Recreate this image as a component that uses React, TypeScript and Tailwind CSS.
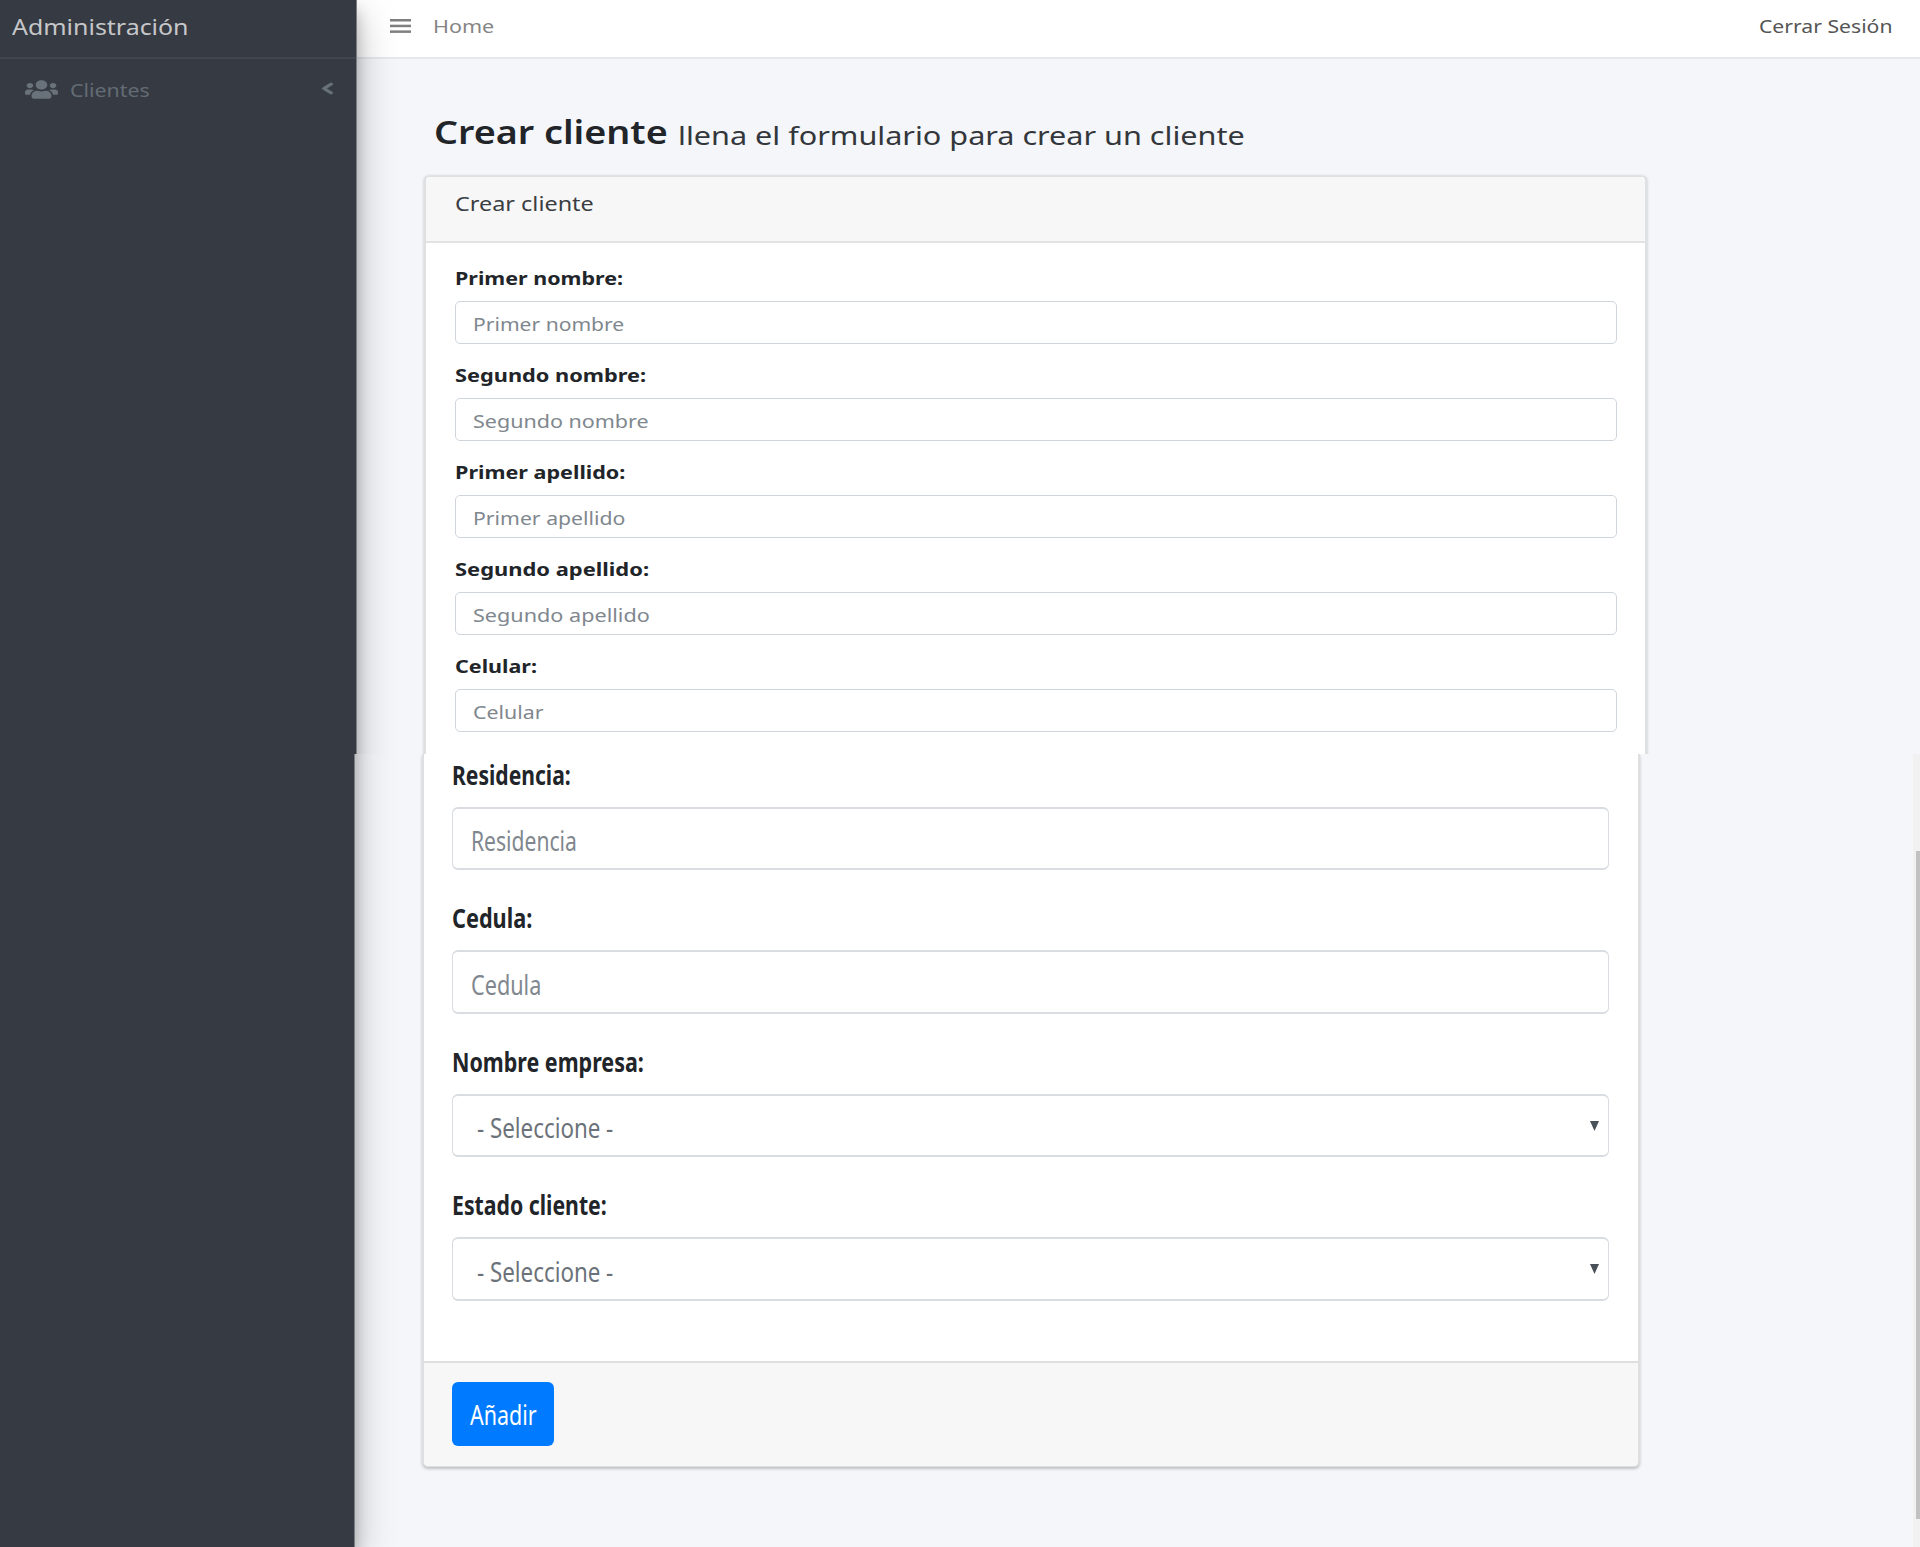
import { useLayoutEffect, useRef, useState } from "react";
import { FaChevronLeft, FaUsers } from "react-icons/fa";

/** One line of text, stretched horizontally to the given width. */
function Line({ text, width, className = "" }: { text: string; width: number; className?: string }) {
  const ref = useRef<HTMLSpanElement>(null);
  const [scale, setScale] = useState(1);
  useLayoutEffect(() => {
    if (ref.current) setScale(width / ref.current.offsetWidth);
  }, [width]);
  return (
    <span className={`block whitespace-pre ${className}`} style={{ width }}>
      <span ref={ref} className="inline-block origin-left" style={{ transform: `scaleX(${scale})` }}>
        {text}
      </span>
    </span>
  );
}

const wideFields = [
  { label: "Primer nombre:", lw: 168, hint: "Primer nombre", hw: 151 },
  { label: "Segundo nombre:", lw: 191, hint: "Segundo nombre", hw: 175.5 },
  { label: "Primer apellido:", lw: 170, hint: "Primer apellido", hw: 152 },
  { label: "Segundo apellido:", lw: 193.5, hint: "Segundo apellido", hw: 176.5 },
  { label: "Celular:", lw: 82.5, hint: "Celular", hw: 70 },
];

const tallFields = [
  { label: "Residencia:", lw: 119, hint: "Residencia", hw: 105.5, select: false },
  { label: "Cedula:", lw: 80, hint: "Cedula", hw: 70, select: false },
  { label: "Nombre empresa:", lw: 192, hint: "- Seleccione -", hw: 136, select: true },
  { label: "Estado cliente:", lw: 155, hint: "- Seleccione -", hw: 136, select: true },
];

function TopSection() {
  return (
    <section className="flex h-[754px] overflow-hidden">
      <aside className="relative z-10 h-[820px] w-[357px] shrink-0 border-r border-[#7b7e83] bg-[#363a42] shadow-[0_16px_38px_rgba(0,0,0,0.25),0_11px_14px_rgba(0,0,0,0.22)]">
        <div className="h-[59px] w-full border-b-2 border-[#3f464d] pt-[10px] pl-[12px] text-[22.4px] leading-[33px] text-[#c6c7c9]">
          <Line text="Administración" width={176} />
        </div>
        <div className="mt-[18px] flex h-[27px] items-start pl-[25px] text-[#69727a]">
          <FaUsers className="mt-[2px] h-[21px] w-[33px]" preserveAspectRatio="none" />
          <Line text="Clientes" width={79.5} className="ml-[12px] text-[18px] leading-[27px] text-[#636c74]" />
          <FaChevronLeft className="mt-[5px] ml-[171px] h-[13px] w-[13px]" stroke="currentColor" strokeWidth="24" preserveAspectRatio="none" />
        </div>
      </aside>
      <div className="flex grow flex-col">
        <header className="flex h-[59px] shrink-0 items-start border-b-2 border-[#e6e8ec] bg-white pt-[13px] pr-[27px] pl-[33px] text-[18px] leading-[27px]">
          <svg className="mt-[6px] h-[14px] w-[21px]" viewBox="0 0 21 14" fill="#7f7f7f">
            <rect y="0" width="21" height="2.5" />
            <rect y="5.7" width="21" height="2.5" />
            <rect y="11.4" width="21" height="2.5" />
          </svg>
          <Line text="Home" width={61} className="ml-[22px] text-[#858585]" />
          <Line text="Cerrar Sesión" width={134} className="ml-auto text-[#555]" />
        </header>
        <div className="pl-[67px]">
          <h1 className="mt-[48px] ml-[10px] flex h-[50px] items-start text-[#212529]">
            <Line text="Crear cliente" width={234} className="text-[32.4px] leading-[49px] font-semibold" />
            <Line text="llena el formulario para crear un cliente" width={567} className="ml-[10px] text-[26px] leading-[56px] text-[#33373b]" />
          </h1>
          <div className="mt-[19px] h-[640px] w-[1223px] rounded-t-[5px] border-x-2 border-t border-[#dfe0e1] bg-white shadow-[0_0_3px_rgba(0,0,0,0.22)]">
            <div className="h-[66px] rounded-t-[4px] border-b-2 border-[#e3e3e4] bg-[#f7f7f7] pt-[12px] pl-[29px] text-[19.8px] leading-[30px] text-[#3a3e42]">
              <Line text="Crear cliente" width={138.5} />
            </div>
            <div className="pt-[22px] pr-[28px] pl-[29px]">
              {wideFields.map((f) => (
                <div key={f.label} className="h-[97px] text-[18px] leading-[27px]">
                  <Line text={f.label} width={f.lw} className="font-bold text-[#212529]" />
                  <div className="mt-[9px] flex h-[43px] w-full items-center rounded-[5px] border border-[#d0d5db] pt-[3px] pl-[17px] text-[#80878e]">
                    <Line text={f.hint} width={f.hw} />
                  </div>
                </div>
              ))}
            </div>
          </div>
        </div>
      </div>
    </section>
  );
}

function BottomSection() {
  return (
    <section className="flex h-[793px] overflow-hidden">
      <aside className="relative z-10 -mt-[60px] h-[853px] w-[355px] shrink-0 border-r border-[#7b7e83] bg-[#363a42] shadow-[0_16px_38px_rgba(0,0,0,0.25),0_11px_14px_rgba(0,0,0,0.22)]" />
      <div className="flex grow justify-between pl-[67px]">
        <div className="h-[713px] w-[1218px] rounded-b-[6px] border-x-2 border-b border-[#dedfe0] bg-white shadow-[0_2px_3px_rgba(0,0,0,0.22)]">
          <div className="h-[607px] pr-[29px] pl-[28px]">
            {tallFields.map((f) => (
              <div key={f.label} className="h-[143.5px] pt-[0.6px] text-[26.6px] leading-[40px]">
                <Line text={f.label} width={f.lw} className="font-bold text-[#212529]" />
                <div className="mt-[12.4px] flex h-[63.5px] w-full items-center justify-between rounded-[6px] border-x border-y-2 border-[#d9dde2] pt-[5px] pr-[9px] pl-[18px] text-[#80878e]">
                  <Line text={f.hint} width={f.hw} className={f.select ? "ml-[6px] text-[#6b7279]" : ""} />
                  {f.select && (
                    <svg className="-mt-[5px] h-[10px] w-[9px]" viewBox="0 0 9 10" fill="#495057">
                      <path d="M0 0h9L4.5 10z" />
                    </svg>
                  )}
                </div>
              </div>
            ))}
          </div>
          <div className="h-[105px] rounded-b-[5px] border-t-2 border-[#dfdfe0] bg-[#f7f7f7] pt-[19px] pl-[28px]">
            <button className="flex h-[64px] w-[102px] items-center rounded-[6px] bg-[#007bff] pt-[2px] pl-[18px] text-[26.6px] leading-[40px] text-white">
              <Line text="Añadir" width={67} />
            </button>
          </div>
        </div>
        <div className="flex w-[7px] justify-end bg-[#f1f1f1]">
          <div className="mt-[97px] h-[668px] w-[4px] bg-[#c1c1c1]" />
        </div>
      </div>
    </section>
  );
}

export default function App() {
  return (
    <div className="h-[1547px] w-[1920px] overflow-hidden bg-[#f4f6f9] font-['Noto_Sans','Open_Sans',sans-serif]">
      <TopSection />
      <BottomSection />
    </div>
  );
}
